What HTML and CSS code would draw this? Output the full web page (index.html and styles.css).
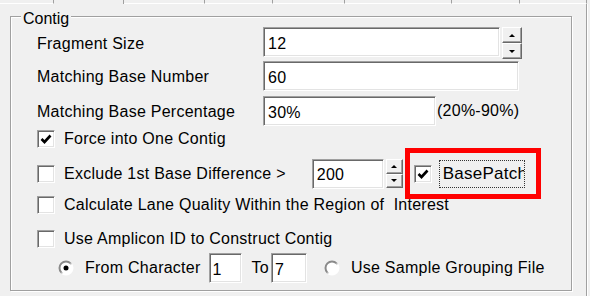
FILE: index.html
```html
<!DOCTYPE html>
<html lang="en">
<head>
    <meta charset="UTF-8">
    <title>Contig Options</title>
    <link rel="stylesheet" href="styles.css">
</head>
<body>

    <div class="tabs">
        <span class="tab t1"></span>
        <span class="tab t2 on"></span>
        <span class="tab t3"></span>
        <span class="tab t4"></span>
        <span class="tab t5"></span>
        <span class="tab t6"></span>
        <span class="tab t7"></span>
        <span class="tab t8"></span>
    </div>

    <div class="page">
        <fieldset class="group">
            <legend>Contig</legend>
            <div class="rows">

                <div class="row r1">
                    <label class="lbl">Fragment Size</label>
                    <input class="txt w-frag" type="text" value="12">
                    <span class="spin big"><span class="up"></span><span class="down"></span></span>
                </div>

                <div class="row r2">
                    <label class="lbl">Matching Base Number</label>
                    <input class="txt w-num" type="text" value="60">
                </div>

                <div class="row r3">
                    <label class="lbl">Matching Base Percentage</label>
                    <input class="txt w-pct" type="text" value="30%">
                    <span class="hint">(20%-90%)</span>
                </div>

                <div class="row r4">
                    <span class="cb"><svg viewBox="0 0 16 16"><polyline points="3.5,8 6.5,11 12.5,4.5" /></svg></span>
                    <span class="cap">Force into One Contig</span>
                </div>

                <div class="row r5">
                    <span class="cb"></span>
                    <span class="cap">Exclude 1st Base Difference &gt;</span>
                    <input class="txt w-diff" type="text" value="200">
                    <span class="spin small"><span class="up"></span><span class="down"></span></span>
                    <div class="bp">
                        <span class="cb"><svg viewBox="0 0 16 16"><polyline points="3.5,8 6.5,11 12.5,4.5" /></svg></span>
                        <span class="focus">BasePatch</span>
                        <span class="mark"></span>
                    </div>
                </div>

                <div class="row r6">
                    <span class="cb"></span>
                    <span class="cap">Calculate Lane Quality Within the Region of&nbsp; Interest</span>
                </div>

                <div class="row r7">
                    <span class="cb"></span>
                    <span class="cap">Use Amplicon ID to Construct Contig</span>
                </div>

                <div class="row r8">
                    <svg class="radio first" viewBox="0 0 16 16">
                        <defs>
                            <linearGradient id="ring" x1="0" y1="0" x2="1" y2="1">
                                <stop offset="0.45" stop-color="#8a8a8a"/>
                                <stop offset="0.6" stop-color="#ffffff"/>
                            </linearGradient>
                        </defs>
                        <circle cx="8" cy="8" r="6.5" fill="#fff" stroke="url(#ring)" stroke-width="2"/>
                        <circle cx="8" cy="8" r="2.5" fill="#000"/>
                    </svg>
                    <span class="cap">From Character</span>
                    <input class="txt w-ch1" type="text" value="1">
                    <span class="to">To</span>
                    <input class="txt w-ch2" type="text" value="7">
                    <svg class="radio second" viewBox="0 0 16 16">
                        <circle cx="8" cy="8" r="6.5" fill="#fff" stroke="url(#ring)" stroke-width="2"/>
                    </svg>
                    <span class="cap">Use Sample Grouping File</span>
                </div>

            </div>
        </fieldset>
    </div>

</body>
</html>
```

FILE: styles.css
```css
body {
    margin: 0;
    background: #f0f0f0;
    font-family: "Liberation Sans", Arial, sans-serif;
    font-size: 16px;
    letter-spacing: 0.25px;
    color: #000;
}

/* tab strip remains at the very top */
.tabs {
    display: flex;
    height: 4px;
    width: 587px;
}
.tab {
    box-sizing: border-box;
    border-right: 1px solid #a0a0a0;
    border-bottom: 1px solid #fff;
}
.tab.on { border-bottom: none; }
.t1 { width: 54px; }
.t2 { width: 70px; }
.t3 { width: 81px; }
.t4 { width: 68px; }
.t5 { width: 72px; }
.t6 { width: 107px; }
.t7 { width: 68px; }
.t8 { width: 67px; }

.page {
    width: 576px;
    padding: 0 0 6px 10px;
    border-right: 1px solid #a0a0a0;
    box-shadow: 1px 0 0 #fff;
}

.group {
    margin: 0;
    padding: 0 0 7px 0;
    width: 562px;
    box-sizing: border-box;
    border: 1px solid #a0a0a0;
    box-shadow: inset 1px 1px 0 #fff, 1px 1px 0 #fff;
}
.group legend {
    margin-left: 10px;
    padding: 6px 2px 0;
    line-height: 18px;
    letter-spacing: 0;
    background: #f0f0f0;
}

.rows { padding-left: 26px; }

.row {
    display: flex;
    align-items: center;
}
.r1 { height: 32px; margin-top: -1px; align-items: flex-start; }
.r2 { height: 30px; margin-top: 2px; }
.r3 { height: 30px; margin-top: 5px; }
.r4 { height: 22px; margin-top: 2px; }
.r5 { height: 29px; margin-top: 9px; }
.r6 { height: 20px; margin-top: 7px; }
.r7 { height: 21px; margin-top: 13px; }
.r8 { height: 30px; margin-top: 4px; }

.lbl {
    width: 226px;
    flex: none;
    padding-top: 2px;
}
.r1 .lbl { line-height: 32px; padding-top: 1px; }

/* sunken edit boxes */
.txt {
    box-sizing: border-box;
    height: 30px;
    margin: 0;
    padding: 3px 4px 0;
    font: inherit;
    letter-spacing: inherit;
    color: #000;
    background: #fff;
    border: 1px solid;
    border-color: #a0a0a0 #fff #fff #a0a0a0;
    box-shadow: inset 1px 1px 0 #696969, inset -1px -1px 0 #e3e3e3;
    outline: none;
    flex: none;
}
.w-frag { width: 237px; }
.w-num { width: 256px; }
.w-pct { width: 173px; }
.w-diff { width: 72px; margin-left: 26px; }
.w-ch1 { width: 33px; margin-left: 8px; padding-left: 3px; }
.w-ch2 { width: 36px; margin-left: 2px; padding-left: 3px; }

.hint { margin-left: 1px; }

/* spin buttons */
.spin {
    display: flex;
    flex-direction: column;
    margin-left: 2px;
    flex: none;
}
.spin.big { width: 20px; height: 32px; }
.spin.small { width: 17px; height: 29px; }
.spin span {
    flex: 1;
    box-sizing: border-box;
    display: flex;
    align-items: center;
    justify-content: center;
    background: #f0f0f0;
    border: 1px solid;
    border-color: #fff #696969 #696969 #fff;
    box-shadow: inset -1px -1px 0 #a0a0a0;
}
.spin .up::after,
.spin .down::after {
    content: "";
    border-left: 3px solid transparent;
    border-right: 3px solid transparent;
}
.spin .up::after { border-bottom: 3px solid #000; }
.spin .down::after { border-top: 3px solid #000; }

/* check boxes */
.cb {
    width: 18px;
    height: 18px;
    box-sizing: border-box;
    flex: none;
    background: #fff;
    border: 1px solid;
    border-color: #a0a0a0 #fff #fff #a0a0a0;
    box-shadow: inset 1px 1px 0 #696969, inset -1px -1px 0 #e3e3e3;
}
.cb svg {
    display: block;
    width: 16px;
    height: 16px;
    fill: none;
    stroke: #000;
    stroke-width: 2.6;
}
.cap {
    margin-left: 9px;
    white-space: nowrap;
}

.bp {
    position: relative;
    align-self: stretch;
    display: flex;
    align-items: center;
    margin-left: 11px;
}
.focus {
    box-sizing: border-box;
    width: 86px;
    height: 28px;
    margin-left: 7px;
    padding-left: 3px;
    line-height: 26px;
    font-size: 17px;
    white-space: nowrap;
    overflow: hidden;
    border: 1px dotted #333;
}
.mark {
    position: absolute;
    left: -9px;
    top: -11px;
    width: 136px;
    height: 51px;
    box-sizing: border-box;
    border: 5px solid #f00;
}

/* option buttons */
.radio {
    width: 16px;
    height: 16px;
    flex: none;
}
.radio.first { margin-left: 21px; }
.radio.second { margin-left: 17px; }
.r8 .cap { margin-left: 11px; }
.to { margin-left: 10px; }
```
